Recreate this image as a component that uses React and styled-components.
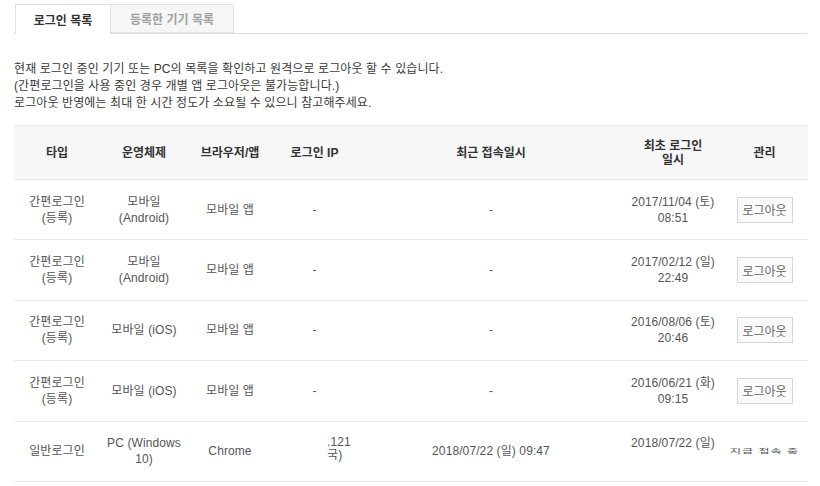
import React from "react";
import styled, { createGlobalStyle } from "styled-components";

const GlobalStyle = createGlobalStyle`
  body {
    margin: 0;
    background: #fff;
    font-family: "Liberation Sans", "Noto Sans CJK KR", sans-serif;
  }
`;

const Page = styled.div`
  width: 820px;
  height: 486px;
  overflow: hidden;
  padding: 4px 12px 0 14px;
  box-sizing: border-box;
`;

const TabBar = styled.div`
  display: flex;
  padding-left: 1px;
  border-bottom: 1px solid #dcdcdc;
  height: 30px;
  width: 793px;
  box-sizing: border-box;
`;

const Tab = styled.div`
  display: flex;
  align-items: center;
  justify-content: center;
  width: ${(p) => p.$w}px;
  height: ${(p) => (p.$active ? 30 : 29)}px;
  box-sizing: border-box;
  border: 1px solid #e2e2e2;
  border-bottom: ${(p) => (p.$active ? "none" : "1px solid #e2e2e2")};
  border-left-width: ${(p) => (p.$active ? 1 : 0)}px;
  background: ${(p) => (p.$active ? "#fff" : "#f6f6f6")};
  color: ${(p) => (p.$active ? "#333" : "#a0a0a0")};
  font-size: 12px;
  font-weight: bold;
`;

const Intro = styled.div`
  margin-top: 27px;
  font-size: 12px;
  line-height: 17px;
  color: #3a3a3a;
  letter-spacing: 0.1px;
`;

const Table = styled.div`
  margin-top: 13px;
  width: 794px;
  display: grid;
  grid-template-columns: 86px 88px 84px 85px 268px 96px 87px;
`;

const HeadCell = styled.div`
  height: 55px;
  display: flex;
  align-items: center;
  justify-content: center;
  text-align: center;
  background: #f7f7f7;
  border-top: 1px solid #ececec;
  border-bottom: 1px solid #e6e6e6;
  box-sizing: border-box;
  font-size: 12px;
  line-height: 14px;
  font-weight: bold;
  color: #333;
`;

const Cell = styled.div`
  height: 60.4px;
  display: flex;
  align-items: ${(p) => (p.$top ? "flex-start" : "center")};
  justify-content: center;
  text-align: center;
  border-bottom: 1px solid #e8e8e8;
  box-sizing: border-box;
  padding-top: ${(p) => (p.$top ? "13px" : "0")};
  font-size: 12px;
  line-height: 16px;
  color: #555;
  letter-spacing: 0.1px;
`;

const IpClip = styled.div`
  width: 100%;
  padding-left: 55px;
  box-sizing: border-box;
  text-align: left;
  line-height: 13px;
  margin-top: -4px;
`;

const NowText = styled.span`
  display: inline-block;
  margin-top: -6px;
  font-size: 12px;
  line-height: 12px;
  color: #555;
  letter-spacing: 1px;
  transform: scaleY(0.5);
  transform-origin: center bottom;
`;

const LogoutButton = styled.button`
  width: 56px;
  height: 26px;
  border: 1px solid #d6d6d6;
  background: #fafafa;
  color: #666;
  font-family: "Liberation Sans", "Noto Sans CJK KR", sans-serif;
  font-size: 12px;
  padding: 0;
  cursor: pointer;
`;

const rows = [
  { os: ["모바일", "(Android)"], first: ["2017/11/04 (토)", "08:51"] },
  { os: ["모바일", "(Android)"], first: ["2017/02/12 (일)", "22:49"] },
  { os: ["모바일 (iOS)"], first: ["2016/08/06 (토)", "20:46"] },
  { os: ["모바일 (iOS)"], first: ["2016/06/21 (화)", "09:15"] },
];

const Lines = ({ items }) =>
  items.map((t, i) => (
    <React.Fragment key={i}>
      {i > 0 && <br />}
      {t}
    </React.Fragment>
  ));

function App() {
  return (
    <Page>
      <GlobalStyle />
      <TabBar>
        <Tab $active $w={96}>로그인 목록</Tab>
        <Tab $w={123}>등록한 기기 목록</Tab>
      </TabBar>
      <Intro>
        현재 로그인 중인 기기 또는 PC의 목록을 확인하고 원격으로 로그아웃 할 수 있습니다.
        <br />
        (간편로그인을 사용 중인 경우 개별 앱 로그아웃은 불가능합니다.)
        <br />
        로그아웃 반영에는 최대 한 시간 정도가 소요될 수 있으니 참고해주세요.
      </Intro>
      <Table>
        <HeadCell>타입</HeadCell>
        <HeadCell>운영체제</HeadCell>
        <HeadCell>브라우저/앱</HeadCell>
        <HeadCell>로그인 IP</HeadCell>
        <HeadCell>최근 접속일시</HeadCell>
        <HeadCell>
          최초 로그인
          <br />
          일시
        </HeadCell>
        <HeadCell>관리</HeadCell>

        {rows.map((r, i) => (
          <React.Fragment key={i}>
            <Cell>
              간편로그인
              <br />
              (등록)
            </Cell>
            <Cell>
              <span>
                <Lines items={r.os} />
              </span>
            </Cell>
            <Cell>모바일 앱</Cell>
            <Cell>-</Cell>
            <Cell>-</Cell>
            <Cell>
              <span>
                <Lines items={r.first} />
              </span>
            </Cell>
            <Cell>
              <LogoutButton>로그아웃</LogoutButton>
            </Cell>
          </React.Fragment>
        ))}

        <Cell>일반로그인</Cell>
        <Cell>
          PC (Windows
          <br />
          10)
        </Cell>
        <Cell>Chrome</Cell>
        <Cell>
          <IpClip>
            .121
            <br />
            국)
          </IpClip>
        </Cell>
        <Cell>2018/07/22 (일) 09:47</Cell>
        <Cell $top>2018/07/22 (일)</Cell>
        <Cell>
          <NowText>지금 접속 중</NowText>
        </Cell>
      </Table>
    </Page>
  );
}

export default App;
